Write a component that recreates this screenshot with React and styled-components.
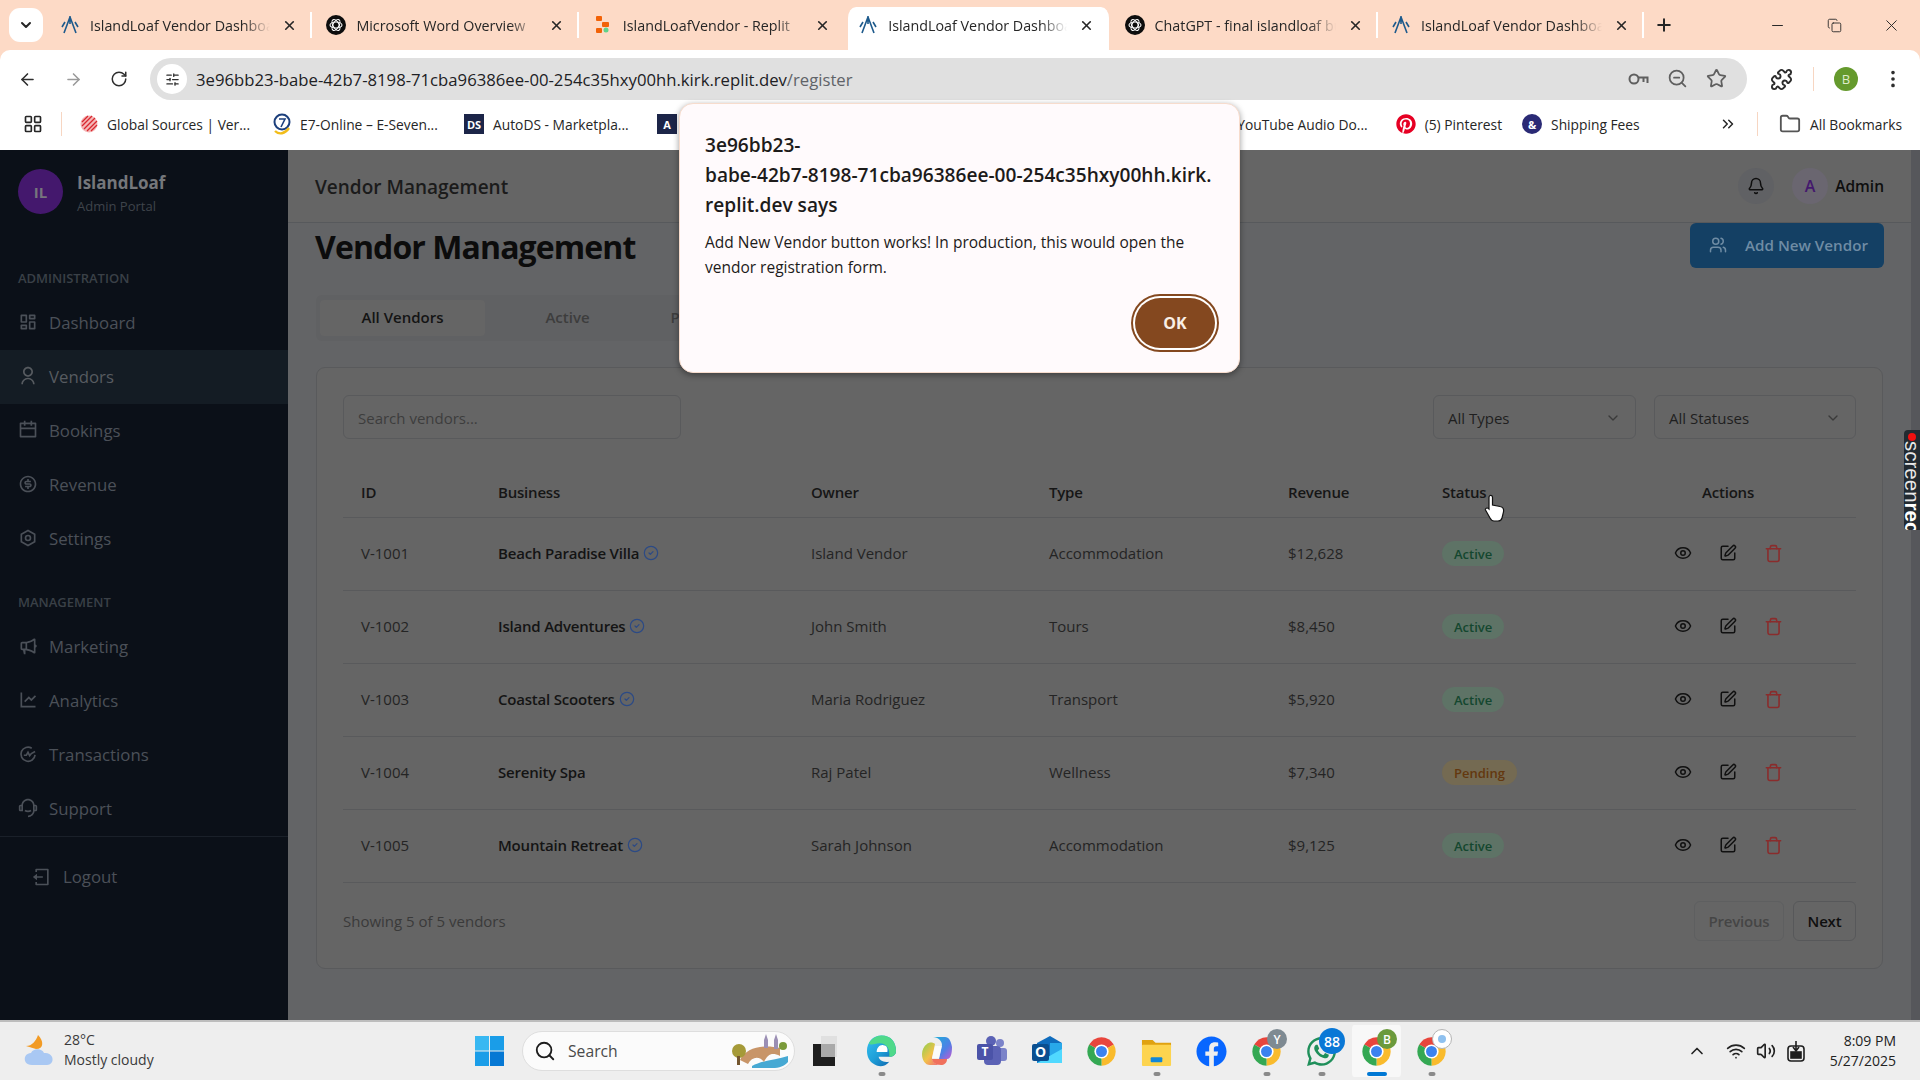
import React from "react";
import styled, { createGlobalStyle } from "styled-components";
import {
  ArrowLeft, ArrowRight, RotateCw, ZoomOut, Star, Puzzle, EllipsisVertical, X, Plus,
  ChevronDown, Minus, Copy, LayoutGrid, Folder, ChevronsRight, Bell, Users, CircleCheck, Search,
  ChevronUp, Wifi, Volume2, SlidersHorizontal, Eye, SquarePen, Trash,
} from "lucide-react";
import {
  RiDashboardLine, RiUserLine, RiCalendarLine, RiMoneyDollarCircleLine, RiMegaphoneLine,
  RiLineChartLine, RiCustomerService2Line, RiLogoutBoxLine,
} from "react-icons/ri";
import { FaPinterest, FaFacebook, FaWhatsapp } from "react-icons/fa";

const GlobalStyle = createGlobalStyle`
  html, body { margin: 0; padding: 0; height: 100%; overflow: hidden; }
  body { font-family: "Open Sans", "Liberation Sans", sans-serif; }
  * { box-sizing: border-box; }
`;

const Screen = styled.div`
  position: relative;
  width: 1920px;
  height: 1080px;
  overflow: hidden;
  display: flex;
  flex-direction: column;
  background: #fddac6;
`;

/* browser chrome */
const TabStrip = styled.div`
  height: 50px;
  flex: none;
  display: flex;
  align-items: flex-end;
  padding-left: 46px;
  color: #262626;
`;

const TabSearch = styled.div`
  position: absolute;
  left: 9px;
  top: 8px;
  width: 34px;
  height: 34px;
  border-radius: 11px;
  background: #fff;
  display: flex;
  align-items: center;
  justify-content: center;
`;

const Tab = styled.div`
  position: relative;
  width: 266.4px;
  height: 43px;
  flex: none;
  display: flex;
  align-items: center;
  padding: 0 15px 7px ${(p) => p.$pad}px;
  font-size: 14.3px;
  border: solid transparent;
  border-width: 0 ${(p) => (p.$active ? 3 : 0)}px;
  background: ${(p) => (p.$active ? "#fff" : "transparent")};
  background-clip: padding-box;
  border-radius: 11px 11px 0 0;
  &::after {
    content: "";
    display: ${(p) => (p.$sep ? "block" : "none")};
    position: absolute;
    right: 0;
    top: 5px;
    width: 2px;
    height: 26px;
    background: #fff;
  }
`;

const TabTitle = styled.span`
  flex: 1;
  margin-left: 10px;
  margin-right: 12px;
  white-space: nowrap;
  overflow: hidden;
  -webkit-mask-image: linear-gradient(90deg, #000 85%, transparent 100%);
  mask-image: linear-gradient(90deg, #000 85%, transparent 100%);
`;

const NewTab = styled.div`
  margin-left: 10px;
  height: 43px;
  padding-bottom: 7px;
  display: flex;
  align-items: center;
`;

const WindowControls = styled.div`
  margin-left: auto;
  height: 50px;
  width: 170px;
  display: flex;
  align-items: center;
  justify-content: space-between;
  padding: 0 19px;
`;

const Toolbar = styled.div`
  height: 50px;
  flex: none;
  background: #fff;
  border-radius: 10px 10px 0 0;
  display: flex;
  align-items: center;
  padding: 8px 18px 0 18px;
  color: #2e2e2e;
`;

const NavIcons = styled.div`
  width: 132px;
  flex: none;
  display: flex;
  gap: 27px;
  align-items: center;
`;

const Omnibox = styled.div`
  width: 1597px;
  flex: none;
  height: 42px;
  border-radius: 21px;
  background: #e0e0e0;
  display: flex;
  align-items: center;
  padding: 0 20px 0 7px;
`;

const SiteInfo = styled.div`
  width: 30px;
  height: 30px;
  border-radius: 50%;
  background: #fff;
  display: flex;
  align-items: center;
  justify-content: center;
  margin-right: 9px;
`;

const UrlText = styled.div`
  flex: 1;
  font-size: 16.7px;
  color: #202124;
  span { color: #5f6368; }
`;

const OmniIcons = styled.div`
  display: flex;
  gap: 18px;
  color: #5f5f5f;
`;

const ToolbarEnd = styled.div`
  flex: 1;
  display: flex;
  align-items: center;
  padding-left: 23px;
  gap: 20px;
`;

const ProfileDot = styled.div`
  width: 24px;
  height: 24px;
  border-radius: 50%;
  background: #659a2d;
  color: #dfeccc;
  font-size: 13px;
  display: flex;
  align-items: center;
  justify-content: center;
`;

const Kebab = styled.div`
  margin-left: 4px;
  display: flex;
`;

const ThinRule = styled.div`
  width: 1px;
  height: 24px;
  flex: none;
  background: #f7d6c2;
  margin: 0 ${(p) => p.$right || 0}px 0 ${(p) => p.$left || 0}px;
`;

const BookmarkBar = styled.div`
  height: 50px;
  flex: none;
  background: #fff;
  display: flex;
  align-items: center;
  padding: 0 18px 2px 23px;
  font-size: 13.8px;
  color: #262626;
`;

const BookmarkGroup = styled.div`
  display: flex;
  align-items: center;
  gap: ${(p) => p.$gap || 0}px;
  margin-left: ${(p) => (p.$end ? "auto" : "0")};
`;

const Bookmark = styled.div`
  display: flex;
  align-items: center;
  gap: 9px;
  white-space: nowrap;
  width: ${(p) => (p.$w ? `${p.$w}px` : "auto")};
  margin-right: ${(p) => p.$right || 0}px;
`;

const Favicon = styled.div`
  width: 20px;
  height: 20px;
  flex: none;
  border-radius: ${(p) => (p.$round ? "50%" : "0")};
  background: ${(p) => p.$bg || "transparent"};
  color: #fff;
  font-size: 11px;
  font-weight: 700;
  display: flex;
  align-items: center;
  justify-content: center;
`;

const MoreBookmarks = styled.div`
  display: flex;
  margin: 0 20px 0 77px;
`;

/* page */
const Body = styled.div`
  flex: 1;
  min-height: 0;
  display: flex;
`;

const Sidebar = styled.aside`
  width: 288px;
  flex: none;
  background: #0b1018;
  display: flex;
  flex-direction: column;
  color: #4b5058;
`;

const Brand = styled.div`
  height: 96px;
  padding: 19px 18px 0;
  display: flex;
  gap: 14px;
`;

const BrandMark = styled.div`
  width: 45px;
  height: 45px;
  border-radius: 50%;
  background: #44186d;
  color: #77757d;
  font-size: 15px;
  font-weight: 700;
  display: flex;
  align-items: center;
  justify-content: center;
`;

const BrandName = styled.div`
  font-size: 17px;
  font-weight: 700;
  line-height: 27px;
  color: #75777b;
`;

const BrandSub = styled.div`
  font-size: 13px;
  line-height: 20px;
  color: #3f444b;
`;

const SectionLabel = styled.div`
  height: 50px;
  padding: 22px 18px 0;
  font-size: 13px;
  line-height: 20px;
  font-weight: 600;
  color: #3a4047;
  margin-top: ${(p) => p.$top || 0}px;
`;

const NavItem = styled.div`
  height: 54px;
  display: flex;
  align-items: center;
  gap: 11px;
  padding: 0 0 2px 18px;
  font-size: 16.8px;
  color: ${(p) => (p.$active ? "#575b60" : "#4b5058")};
  background: ${(p) => (p.$active ? "#141c24" : "transparent")};
`;

const SideFoot = styled.div`
  border-top: 1px solid #1a2029;
  height: 84px;
  display: flex;
  align-items: center;
  gap: 11px;
  padding: 0 0 4px 32px;
  font-size: 16.8px;
`;

const Main = styled.main`
  flex: 1;
  min-width: 0;
  background: #636466;
  display: flex;
  flex-direction: column;
  color: #1b1b1b;
`;

const MainHead = styled.header`
  height: 73px;
  flex: none;
  border-bottom: 1px solid #57595c;
  background: #656565;
  display: flex;
  align-items: center;
  padding: 0 27px 0 27px;
  margin-right: 9px;
`;

const MainHeadTitle = styled.div`
  flex: 1;
  padding-top: 2px;
  font-size: 19px;
  font-weight: 600;
`;

const RoundIcon = styled.div`
  width: 36px;
  height: 36px;
  border-radius: 50%;
  background: ${(p) => p.$bg};
  color: ${(p) => p.$fg};
  font-size: 16px;
  font-weight: 600;
  display: flex;
  align-items: center;
  justify-content: center;
  margin-right: ${(p) => p.$gap}px;
`;

const AdminName = styled.div`
  font-size: 15.5px;
  font-weight: 600;
  color: #0e0e0e;
`;

const Content = styled.div`
  position: relative;
  flex: 1;
  padding: 0 28px;
  margin-right: 9px;
`;

const TitleRow = styled.div`
  display: flex;
  justify-content: space-between;
  align-items: flex-start;
  height: 72px;
`;

const PageTitle = styled.h1`
  margin: 0 0 0 -1px;
  font-size: 32px;
  line-height: 48px;
  font-weight: 700;
  letter-spacing: -0.9px;
  color: #0c0c0c;
`;

const PrimaryButton = styled.div`
  width: 194px;
  height: 45px;
  margin-right: -1px;
  padding: 0 0 2px 19px;
  border-radius: 6px;
  background: #144064;
  color: #6f8ca4;
  font-size: 15.2px;
  font-weight: 600;
  display: flex;
  align-items: center;
  gap: 18px;
`;

const TabsList = styled.div`
  height: 46px;
  width: 700px;
  padding: 5px 4px;
  display: flex;
  background: #606163;
  border-radius: 6px;
  margin-bottom: 26px;
`;

const TabTrigger = styled.div`
  width: ${(p) => p.$w || 165}px;
  height: 36px;
  padding-bottom: 2px;
  border-radius: 4px;
  background: ${(p) => (p.$active ? "#656565" : "transparent")};
  color: ${(p) => (p.$active ? "#141414" : "#3d3d3d")};
  font-size: 15px;
  font-weight: 600;
  display: flex;
  align-items: center;
  justify-content: center;
`;

const Card = styled.section`
  border: 1px solid #595a5c;
  border-radius: 9px;
  background: #656565;
  padding: 27px 26px 26px;
  height: 602px;
`;

const Filters = styled.div`
  display: flex;
  align-items: center;
  gap: 18px;
  margin-bottom: 29px;
`;

const Field = styled.div`
  height: 44px;
  width: ${(p) => p.$w}px;
  margin-right: ${(p) => p.$right || 0}px;
  border: 1px solid #595a5c;
  border-radius: 6px;
  display: flex;
  align-items: center;
  justify-content: space-between;
  padding: 1px 14px 0;
  font-size: 15px;
  color: ${(p) => p.$fg || "#1f1f1f"};
`;

const Row = styled.div`
  display: grid;
  grid-template-columns: 137px 313px 238px 239px 154px 176px 256px;
  align-items: center;
  height: ${(p) => (p.$head ? 50 : 73)}px;
  padding-bottom: 2px;
  border-bottom: 1px solid #595a5c;
  font-size: 15px;
`;

const HeadCell = styled.div`
  padding-left: ${(p) => (p.$center ? 0 : 18)}px;
  text-align: ${(p) => (p.$center ? "center" : "left")};
  font-weight: 600;
  letter-spacing: -0.2px;
  color: #161616;
`;

const Cell = styled.div`
  padding-left: 18px;
  color: #242424;
  display: flex;
  align-items: center;
  gap: 4px;
`;

const BizName = styled.span`
  font-weight: 600;
  letter-spacing: -0.2px;
  color: #141414;
`;

const Badge = styled.span`
  height: 25px;
  padding: 1px 12px 0;
  border-radius: 13px;
  font-size: 13px;
  font-weight: 600;
  display: inline-flex;
  align-items: center;
  background: ${(p) => (p.$status === "Pending" ? "#746a52" : "#5e7366")};
  color: ${(p) => (p.$status === "Pending" ? "#63380f" : "#14472f")};
`;

const Actions = styled.div`
  display: flex;
  justify-content: center;
  align-items: center;
  gap: 27px;
  color: #111;
`;

const TableFoot = styled.div`
  display: flex;
  align-items: center;
  justify-content: space-between;
  margin-top: 18px;
  font-size: 15px;
  color: #3a3a3a;
`;

const Pager = styled.div`
  display: flex;
  gap: 9px;
`;

const PagerButton = styled.div`
  width: ${(p) => p.$w}px;
  height: 40px;
  border: 1px solid ${(p) => (p.$off ? "#5e5f60" : "#57585a")};
  border-radius: 6px;
  display: flex;
  align-items: center;
  justify-content: center;
  font-weight: 600;
  letter-spacing: -0.2px;
  color: ${(p) => (p.$off ? "#454545" : "#0f0f0f")};
`;

const Scrollbar = styled.div`
  position: absolute;
  right: 0;
  top: 150px;
  width: 9px;
  height: 870px;
  background: #56575b;
`;

/* js alert */
const Dialog = styled.div`
  position: absolute;
  left: 679px;
  top: 103px;
  width: 561px;
  height: 270px;
  padding: 26px 25px 0;
  border-radius: 14px;
  border: 1px solid #f7dccd;
  background: #fffafc;
  box-shadow: 0 2px 6px rgba(0, 0, 0, 0.4);
  color: #1d1b1a;
`;

const DialogTitle = styled.div`
  font-size: 19.1px;
  line-height: 30px;
  font-weight: 600;
  margin-bottom: 10px;
`;

const DialogText = styled.div`
  font-size: 15.5px;
  line-height: 25px;
`;

const OkButton = styled.div`
  position: absolute;
  right: 24px;
  bottom: 24px;
  width: 80px;
  height: 50px;
  border-radius: 25px;
  background: #84481f;
  box-shadow: 0 0 0 2px #fff, 0 0 0 4px #84481f;
  color: #f9efe6;
  font-size: 16px;
  font-weight: 700;
  display: flex;
  align-items: center;
  justify-content: center;
`;

const RecWidget = styled.div`
  position: absolute;
  right: 0;
  top: 430px;
  width: 16px;
  height: 100px;
  border-radius: 4px 0 0 4px;
  background: #222a31;
  display: flex;
  flex-direction: column;
  align-items: center;
  padding-top: 3px;
  overflow: hidden;
`;

const RecDot = styled.div`
  width: 8px;
  height: 8px;
  flex: none;
  border-radius: 50%;
  background: #f01010;
`;

const RecText = styled.div`
  writing-mode: vertical-rl;
  font-family: "Liberation Sans", sans-serif;
  font-size: 20.5px;
  line-height: 16px;
  color: #e8e8e8;
  b { color: #fff; font-weight: 900; }
`;

const Pointer = styled.svg`
  position: absolute;
  left: 1484px;
  top: 494px;
`;

/* taskbar */
const Taskbar = styled.footer`
  height: 60px;
  flex: none;
  background: #eeeeee;
  border-top: 2px solid #bdbdbd;
  display: flex;
  align-items: center;
  color: #222;
`;

const Weather = styled.div`
  width: 475px;
  padding: 0 0 2px 24px;
  display: flex;
  gap: 9px;
  align-items: center;
  flex: none;
`;

const WeatherText = styled.div`
  font-size: 14px;
  line-height: 20px;
  color: #3a3a3a;
`;

const SearchPill = styled.div`
  width: 273px;
  height: 40px;
  flex: none;
  margin: 0 2px 0 18px;
  border-radius: 20px;
  background: #fbfbfb;
  border: 1px solid #dedede;
  display: flex;
  align-items: center;
  padding: 0 6px 0 11px;
  gap: 12px;
  font-size: 15.7px;
  color: #4a4a4a;
`;

const SearchLabel = styled.span`
  flex: 1;
`;

const TaskIcon = styled.div`
  position: relative;
  width: 55px;
  height: 52px;
  flex: none;
  margin-right: ${(p) => p.$after || 0}px;
  display: flex;
  align-items: center;
  justify-content: center;
  border: solid transparent;
  border-width: 0 3.5px;
  background: ${(p) => (p.$current ? "#f8f8f8" : "transparent")};
  background-clip: padding-box;
  border-radius: 5px;
  &::after {
    content: "";
    display: ${(p) => (p.$open || p.$current ? "block" : "none")};
    position: absolute;
    left: 50%;
    bottom: 1px;
    transform: translateX(-50%);
    width: ${(p) => (p.$current ? 20 : 7)}px;
    height: 4px;
    border-radius: 2px;
    background: ${(p) => (p.$current ? "#0078d4" : "#8a8a8a")};
  }
`;

const IconBadge = styled.div`
  position: absolute;
  left: ${(p) => p.$left || 25}px;
  top: ${(p) => p.$top || 4}px;
  width: ${(p) => p.$size || 20}px;
  height: ${(p) => p.$size || 20}px;
  border-radius: 50%;
  background: ${(p) => p.$bg};
  border: ${(p) => (p.$ring ? "1px solid #b5b5b5" : "none")};
  color: #fff;
  font-size: ${(p) => (p.$size ? 14 : 12)}px;
  font-weight: 600;
  display: flex;
  align-items: center;
  justify-content: center;
`;

const BadgeDot = styled.span`
  width: 8px;
  height: 8px;
  border-radius: 50%;
  background: #8fc1ef;
`;

const Tray = styled.div`
  margin-left: auto;
  display: flex;
  align-items: center;
  gap: 10px;
  padding-right: 24px;
`;

const Caret = styled.div`
  display: flex;
  margin-right: 9px;
`;

const Clock = styled.div`
  margin-left: 14px;
  text-align: right;
  font-size: 14px;
  line-height: 20px;
  color: #222;
`;

const IslandLogo = ({ size = 20 }) => (
  <svg width={size} height={size} viewBox="0 0 20 20" fill="none" stroke="#1d5a8c" strokeWidth="1.6">
    <path d="M10 1 V9 M10 2 L4 18 M10 2 L16 18 M5 7 L2 12 M15 7 L18 12" />
  </svg>
);

const GptLogo = () => (
  <svg width="20" height="20" viewBox="0 0 20 20" fill="none">
    <circle cx="10" cy="10" r="10" fill="#0d0d0d" />
    <g stroke="#fff" strokeWidth="1.1">
      <ellipse cx="10" cy="10" rx="6" ry="3" />
      <ellipse cx="10" cy="10" rx="6" ry="3" transform="rotate(60 10 10)" />
      <ellipse cx="10" cy="10" rx="6" ry="3" transform="rotate(120 10 10)" />
    </g>
  </svg>
);

const ReplitLogo = () => (
  <svg width="20" height="20" viewBox="0 0 20 20">
    <rect x="3" y="1" width="6" height="5" rx="1" fill="#f26207" />
    <rect x="9" y="7" width="7" height="5" rx="1" fill="#f26207" />
    <rect x="3" y="13" width="6" height="5" rx="1" fill="#f26207" />
    <circle cx="13" cy="15" r="2.5" fill="#5fd38b" />
  </svg>
);

const KeyIcon = () => (
  <svg width="22" height="22" viewBox="0 0 22 22" fill="none" stroke="currentColor" strokeWidth="2">
    <circle cx="7" cy="11" r="4.5" />
    <path d="M11.5 9.5 H20.5 V15 M16.5 10 V14" />
  </svg>
);

const ChromeLogo = () => (
  <svg width="31" height="31" viewBox="0 0 48 48">
    <path d="M24 24 L5 13 A22 22 0 0 1 43 13 Z" fill="#e8453c" />
    <path d="M24 24 L43 13 A22 22 0 0 1 24 46 Z" fill="#f9bb2d" />
    <path d="M24 24 L24 46 A22 22 0 0 1 5 13 Z" fill="#34a853" />
    <circle cx="24" cy="24" r="11" fill="#fff" />
    <circle cx="24" cy="24" r="8.5" fill="#3b82ee" />
  </svg>
);

const EdgeLogo = () => (
  <svg width="31" height="34" viewBox="0 0 32 34">
    <defs>
      <linearGradient id="edgeg" x1="0" y1="0" x2="1" y2="1">
        <stop offset="0" stopColor="#35c1f1" />
        <stop offset="0.5" stopColor="#1e9fd8" />
        <stop offset="1" stopColor="#0c59a4" />
      </linearGradient>
    </defs>
    <path d="M16 1 C26 1 31 8 31 17 C31 21 28 23 24 23 L13 23 C14 27 18 29 24 28 C20 33 14 34 9 31 C3 28 1 22 1 17 C1 8 7 1 16 1 Z" fill="url(#edgeg)" />
    <path d="M16 1 C26 1 31 8 31 17 C31 21 28 23 24 23 C25 16 22 9 14 9 C9 9 5 12 3 9 C6 4 11 1 16 1 Z" fill="#4fd98a" />
    <path d="M11 18 C11 13 15 10 18 11 C21 11 23 14 22 18 Z" fill="#fff" />
  </svg>
);

const CopilotLogo = () => (
  <svg width="32" height="32" viewBox="0 0 32 32">
    <defs>
      <linearGradient id="copa" x1="0" y1="0" x2="1" y2="1">
        <stop offset="0" stopColor="#1bb0d8" />
        <stop offset="0.6" stopColor="#4f7fe6" />
        <stop offset="1" stopColor="#c65ad0" />
      </linearGradient>
      <linearGradient id="copb" x1="0" y1="0" x2="1" y2="1">
        <stop offset="0" stopColor="#8ccf4f" />
        <stop offset="0.5" stopColor="#f2c14a" />
        <stop offset="1" stopColor="#ef5f7c" />
      </linearGradient>
    </defs>
    <path d="M12 2 H24 C28 2 30 6 31 12 C31 18 30 24 26 24 H18 L21 10 C21 6 17 2 12 2 Z" fill="url(#copa)" />
    <path d="M6 9 C8 7 12 7 14 9 L11 23 C11 27 15 30 20 30 H9 C4 30 1 25 1 19 C1 15 3 11 6 9 Z" fill="url(#copb)" />
    <path d="M11 24 H26 C26 28 23 30 20 30 C15 30 11 27 11 24 Z" fill="#f0705c" />
    <path d="M14 11 H21 L18 23 H11 Z" fill="#fff" opacity="0.75" />
  </svg>
);

const TeamsLogo = () => (
  <svg width="32" height="32" viewBox="0 0 32 32">
    <circle cx="24" cy="8" r="4" fill="#7b83c9" />
    <rect x="19" y="13" width="12" height="13" rx="3" fill="#7b83c9" />
    <circle cx="15" cy="6" r="5" fill="#5b62b5" />
    <rect x="8" y="11" width="17" height="19" rx="4" fill="#5b62b5" />
    <rect x="1" y="9" width="16" height="16" rx="2" fill="#4b53a8" />
    <text x="9" y="21" textAnchor="middle" fontSize="12" fontWeight="700" fill="#fff" fontFamily="Open Sans">T</text>
  </svg>
);

const OutlookLogo = () => (
  <svg width="32" height="32" viewBox="0 0 32 32">
    <path d="M6 8 L19 1 L31 8 V28 H6 Z" fill="#0f6cbd" />
    <path d="M19 8 H31 V28 H19 Z" fill="#28a8ea" />
    <path d="M6 28 L31 14 V28 Z" fill="#50d9ff" />
    <rect x="1" y="9" width="17" height="17" rx="2" fill="#0a4f90" />
    <text x="9.5" y="22" textAnchor="middle" fontSize="14" fontWeight="700" fill="#fff" fontFamily="Open Sans">O</text>
  </svg>
);

const FolderLogo = () => (
  <svg width="31" height="31" viewBox="0 0 32 32">
    <path d="M1 4 H12 L15 7 H31 V12 H1 Z" fill="#e0a211" />
    <rect x="1" y="9" width="30" height="22" rx="1" fill="#fdd44f" />
    <rect x="10" y="22" width="12" height="5" rx="1" fill="#1287d8" />
  </svg>
);

const WinLogo = () => (
  <svg width="29" height="30" viewBox="0 0 29 30">
    <rect width="14" height="14.5" fill="#38b8f2" />
    <rect x="15" width="14" height="14.5" fill="#1a9de8" />
    <rect y="15.5" width="14" height="14.5" fill="#1a9de8" />
    <rect x="15" y="15.5" width="14" height="14.5" fill="#0678d4" />
  </svg>
);

const TaskViewLogo = () => (
  <svg width="24" height="30" viewBox="0 0 24 30">
    <rect x="0" y="8" width="22" height="22" fill="#1e1e1e" />
    <rect x="8" y="0" width="16" height="21" fill="#e0e0e0" />
    <rect x="8" y="8" width="14" height="13" fill="#a9a9a9" />
  </svg>
);

const WeatherLogo = () => (
  <svg width="31" height="30" viewBox="0 0 31 30">
    <path d="M14 0 C20 6 20 14 12 14 L2 11 C8 11 12 6 14 0 Z" fill="#f29b25" />
    <path d="M8 30 C2 30 0 26 1 22 C2 19 5 18 7 18 C9 13 18 13 20 18 C27 17 30 23 28 27 C27 29 25 30 23 30 Z" fill="#a9c8f3" />
  </svg>
);

const BridgeArt = () => (
  <svg width="56" height="34" viewBox="0 0 56 34">
    <path d="M20 32 C30 26 44 26 56 22 V28 C52 32 48 34 40 34 H20 Z" fill="#47a9d3" />
    <path d="M8 26 C14 14 30 10 48 14 V22 C40 18 36 20 32 28 C28 22 20 22 16 30 Z" fill="#c89568" />
    <circle cx="7" cy="17" r="7" fill="#a59a38" />
    <rect x="5" y="22" width="3" height="9" fill="#73562f" />
    <path d="M32 6 L34 0 L36 6 V14 H32 Z M42 6 L44 0 L46 6 V15 H42 Z" fill="#9b8fb4" />
    <circle cx="51" cy="12" r="4" fill="#7a9a3a" />
  </svg>
);

const GlobalFav = () => (
  <svg width="18" height="20" viewBox="0 0 18 20">
    <circle cx="9" cy="10" r="8.5" fill="#f4b7b7" />
    <g stroke="#d9272e" strokeWidth="1.3">
      <path d="M2 8 L8 2 M2 12 L12 2 M4 15 L15 4 M7 17 L17 7 M11 17 L17 11" />
    </g>
  </svg>
);

const E7Fav = () => (
  <svg width="18" height="22" viewBox="0 0 18 22" fill="none">
    <circle cx="9" cy="9" r="7.5" stroke="#1c3f7c" strokeWidth="2" />
    <path d="M6 6 H12 L8 14" stroke="#1c3f7c" strokeWidth="1.6" />
    <path d="M2 18 C6 22 12 21 16 15" stroke="#f2bd1a" strokeWidth="2.4" />
  </svg>
);

const TrayBattery = () => (
  <svg width="20" height="22" viewBox="0 0 20 22" fill="none" stroke="#1e1e1e" strokeWidth="1.6">
    <rect x="2" y="6" width="16" height="15" rx="3" />
    <rect x="5" y="12" width="10" height="6" fill="#1e1e1e" />
    <path d="M10 1 V10 M7 7 L10 11 L13 7" />
  </svg>
);

function HexGear({ size }) {
  return (
    <svg width={size} height={size} viewBox="0 0 24 24" fill="none" stroke="currentColor" strokeWidth="2">
      <path d="M12 3 L20 7.5 V16.5 L12 21 L4 16.5 V7.5 Z" />
      <circle cx="12" cy="12" r="3" />
    </svg>
  );
}

function PulseCircle({ size }) {
  return (
    <svg width={size} height={size} viewBox="0 0 24 24" fill="none" stroke="currentColor" strokeWidth="2">
      <path d="M20.5 13 A8.5 8.5 0 1 1 16.5 5" />
      <path d="M7 13.5 L10 13.5 L12 10 L14 14 L16 11.5 L20.5 9" />
    </svg>
  );
}

const TABS = [
  { title: "IslandLoaf Vendor Dashboard", icon: <IslandLogo />, sep: true, pad: 14 },
  { title: "Microsoft Word Overview", icon: <GptLogo />, sep: true, pad: 14 },
  { title: "IslandLoafVendor - Replit", icon: <ReplitLogo />, pad: 14 },
  { title: "IslandLoaf Vendor Dashboard", icon: <IslandLogo />, active: true, pad: 10 },
  { title: "ChatGPT - final islandloaf build", icon: <GptLogo />, sep: true, pad: 13 },
  { title: "IslandLoaf Vendor Dashboard", icon: <IslandLogo />, sep: true, pad: 13 },
];

const ADMIN_NAV = [
  { label: "Dashboard", icon: RiDashboardLine },
  { label: "Vendors", icon: RiUserLine, active: true },
  { label: "Bookings", icon: RiCalendarLine },
  { label: "Revenue", icon: RiMoneyDollarCircleLine },
  { label: "Settings", icon: HexGear },
];

const MGMT_NAV = [
  { label: "Marketing", icon: RiMegaphoneLine },
  { label: "Analytics", icon: RiLineChartLine },
  { label: "Transactions", icon: PulseCircle },
  { label: "Support", icon: RiCustomerService2Line },
];

const VENDORS = [
  { id: "V-1001", name: "Beach Paradise Villa", verified: true, owner: "Island Vendor", type: "Accommodation", revenue: "$12,628", status: "Active" },
  { id: "V-1002", name: "Island Adventures", verified: true, owner: "John Smith", type: "Tours", revenue: "$8,450", status: "Active" },
  { id: "V-1003", name: "Coastal Scooters", verified: true, owner: "Maria Rodriguez", type: "Transport", revenue: "$5,920", status: "Active" },
  { id: "V-1004", name: "Serenity Spa", verified: false, owner: "Raj Patel", type: "Wellness", revenue: "$7,340", status: "Pending" },
  { id: "V-1005", name: "Mountain Retreat", verified: true, owner: "Sarah Johnson", type: "Accommodation", revenue: "$9,125", status: "Active" },
];

const TASK_APPS = [
  { key: "edge", el: <EdgeLogo />, open: true },
  { key: "copilot", el: <CopilotLogo /> },
  { key: "teams", el: <TeamsLogo /> },
  { key: "outlook", el: <OutlookLogo /> },
  { key: "chrome", el: <ChromeLogo /> },
  { key: "files", el: <FolderLogo />, open: true },
  { key: "fb", el: <FaFacebook size={31} color="#0866ff" /> },
  { key: "chromeY", el: <ChromeLogo />, open: true, badge: { bg: "#7e8a92", text: "Y" } },
  { key: "wa", el: <FaWhatsapp size={33} color="#1f8f5a" />, open: true, badge: { bg: "#0a78d6", text: "88", left: 22, top: 3, size: 26 } },
  { key: "chromeB", el: <ChromeLogo />, current: true, badge: { bg: "#6b9a3c", text: "B" } },
  { key: "chromeX", el: <ChromeLogo />, open: true, badge: { bg: "#fff", ring: true, dot: true } },
];

const Chrome = () => (
  <>
    <TabStrip>
      <TabSearch>
        <ChevronDown size={16} strokeWidth={3} />
      </TabSearch>
      {TABS.map((t, i) => (
        <Tab key={i} $active={t.active} $sep={t.sep} $pad={t.pad}>
          {t.icon}
          <TabTitle>{t.title}</TabTitle>
          <X size={15} strokeWidth={2.6} />
        </Tab>
      ))}
      <NewTab>
        <Plus size={20} strokeWidth={2.4} />
      </NewTab>
      <WindowControls>
        <Minus size={17} strokeWidth={1.4} />
        <Copy size={15} strokeWidth={1.4} />
        <X size={19} strokeWidth={1.2} />
      </WindowControls>
    </TabStrip>
    <Toolbar>
      <NavIcons>
        <ArrowLeft size={19} />
        <ArrowRight size={19} color="#9a9a9a" />
        <RotateCw size={18} />
      </NavIcons>
      <Omnibox>
        <SiteInfo>
          <SlidersHorizontal size={15} />
        </SiteInfo>
        <UrlText>
          3e96bb23-babe-42b7-8198-71cba96386ee-00-254c35hxy00hh.kirk.replit.dev<span>/register</span>
        </UrlText>
        <OmniIcons>
          <KeyIcon />
          <ZoomOut size={21} />
          <Star size={21} />
        </OmniIcons>
      </Omnibox>
      <ToolbarEnd>
        <Puzzle size={23} />
        <ThinRule />
        <ProfileDot>B</ProfileDot>
        <Kebab><EllipsisVertical size={22} /></Kebab>
      </ToolbarEnd>
    </Toolbar>
    <BookmarkBar>
      <LayoutGrid size={20} />
      <ThinRule $left={18} $right={18} />
      <BookmarkGroup>
        <Bookmark $w={193}><GlobalFav />Global Sources | Ver...</Bookmark>
        <Bookmark $w={191}><E7Fav />E7-Online – E-Seven...</Bookmark>
        <Bookmark $w={193}><Favicon $bg="#1c2548">DS</Favicon>AutoDS - Marketpla...</Bookmark>
        <Favicon $bg="#1c2548">A</Favicon>
      </BookmarkGroup>
      <BookmarkGroup $end $gap={20}>
        <Bookmark $right={8}>YouTube Audio Do...</Bookmark>
        <Bookmark><FaPinterest size={20} color="#e60023" />(5) Pinterest</Bookmark>
        <Bookmark $w={120}><Favicon $bg="#2a2a75" $round>&amp;</Favicon>Shipping Fees</Bookmark>
      </BookmarkGroup>
      <MoreBookmarks><ChevronsRight size={18} /></MoreBookmarks>
      <ThinRule $right={21} />
      <Bookmark><Folder size={22} color="#555" />All Bookmarks</Bookmark>
    </BookmarkBar>
  </>
);

const Side = () => (
  <Sidebar>
    <Brand>
      <BrandMark>IL</BrandMark>
      <div>
        <BrandName>IslandLoaf</BrandName>
        <BrandSub>Admin Portal</BrandSub>
      </div>
    </Brand>
    <SectionLabel>ADMINISTRATION</SectionLabel>
    {ADMIN_NAV.map((n) => (
      <NavItem key={n.label} $active={n.active}>
        <n.icon size={20} />
        {n.label}
      </NavItem>
    ))}
    <SectionLabel $top={4}>MANAGEMENT</SectionLabel>
    {MGMT_NAV.map((n) => (
      <NavItem key={n.label}>
        <n.icon size={20} />
        {n.label}
      </NavItem>
    ))}
    <SideFoot>
      <RiLogoutBoxLine size={20} />
      Logout
    </SideFoot>
  </Sidebar>
);

const VendorTable = () => (
  <>
    <Row $head>
      <HeadCell>ID</HeadCell>
      <HeadCell>Business</HeadCell>
      <HeadCell>Owner</HeadCell>
      <HeadCell>Type</HeadCell>
      <HeadCell>Revenue</HeadCell>
      <HeadCell>Status</HeadCell>
      <HeadCell $center>Actions</HeadCell>
    </Row>
    {VENDORS.map((v) => (
      <Row key={v.id}>
        <Cell>{v.id}</Cell>
        <Cell>
          <BizName>{v.name}</BizName>
          {v.verified && <CircleCheck size={16} strokeWidth={1.8} color="#2c4a85" />}
        </Cell>
        <Cell>{v.owner}</Cell>
        <Cell>{v.type}</Cell>
        <Cell>{v.revenue}</Cell>
        <Cell><Badge $status={v.status}>{v.status}</Badge></Cell>
        <Actions>
          <Eye size={18} />
          <SquarePen size={18} />
          <Trash size={19} color="#8a2c2c" />
        </Actions>
      </Row>
    ))}
  </>
);

const Tasks = () => (
  <Taskbar>
    <Weather>
      <WeatherLogo />
      <WeatherText>
        <div>28°C</div>
        <div>Mostly cloudy</div>
      </WeatherText>
    </Weather>
    <WinLogo />
    <SearchPill>
      <Search size={22} color="#1c1c1c" />
      <SearchLabel>Search</SearchLabel>
      <BridgeArt />
    </SearchPill>
    <TaskIcon $after={2}><TaskViewLogo /></TaskIcon>
    {TASK_APPS.map((a) => (
      <TaskIcon key={a.key} $open={a.open} $current={a.current}>
        {a.el}
        {a.badge && (
          <IconBadge $bg={a.badge.bg} $left={a.badge.left} $top={a.badge.top} $size={a.badge.size} $ring={a.badge.ring}>
            {a.badge.text}
            {a.badge.dot && <BadgeDot />}
          </IconBadge>
        )}
      </TaskIcon>
    ))}
    <Tray>
      <Caret><ChevronUp size={20} /></Caret>
      <Wifi size={20} />
      <Volume2 size={20} />
      <TrayBattery />
      <Clock>
        <div>8:09 PM</div>
        <div>5/27/2025</div>
      </Clock>
    </Tray>
  </Taskbar>
);

export default function App() {
  return (
    <Screen>
      <GlobalStyle />
      <Chrome />
      <Body>
        <Side />
        <Main>
          <MainHead>
            <MainHeadTitle>Vendor Management</MainHeadTitle>
            <RoundIcon $bg="#606164" $fg="#0e0e0e" $gap="18"><Bell size={18} /></RoundIcon>
            <RoundIcon $bg="#6a6670" $fg="#44186d" $gap="7">A</RoundIcon>
            <AdminName>Admin</AdminName>
          </MainHead>
          <Content>
            <TitleRow>
              <PageTitle>Vendor Management</PageTitle>
              <PrimaryButton><Users size={18} />Add New Vendor</PrimaryButton>
            </TitleRow>
            <TabsList>
              <TabTrigger $active>All Vendors</TabTrigger>
              <TabTrigger>Active</TabTrigger>
              <TabTrigger $w={100}>Pending</TabTrigger>
            </TabsList>
            <Card>
              <Filters>
                <Field $w={338} $right={734} $fg="#3d3d3d">Search vendors...</Field>
                <Field $w={203}>All Types<ChevronDown size={16} color="#3a3a3a" /></Field>
                <Field $w={202}>All Statuses<ChevronDown size={16} color="#3a3a3a" /></Field>
              </Filters>
              <VendorTable />
              <TableFoot>
                <span>Showing 5 of 5 vendors</span>
                <Pager>
                  <PagerButton $off $w={90}>Previous</PagerButton>
                  <PagerButton $w={63}>Next</PagerButton>
                </Pager>
              </TableFoot>
            </Card>
          </Content>
        </Main>
      </Body>
      <Tasks />
      <Scrollbar />
      <Dialog>
        <DialogTitle>3e96bb23-<br />babe-42b7-8198-71cba96386ee-00-254c35hxy00hh.kirk.<br />replit.dev says</DialogTitle>
        <DialogText>Add New Vendor button works! In production, this would open the vendor registration form.</DialogText>
        <OkButton>OK</OkButton>
      </Dialog>
      <RecWidget>
        <RecDot />
        <RecText>screen<b>rec</b></RecText>
      </RecWidget>
      <Pointer width="22" height="28" viewBox="0 0 22 28">
        <path d="M6 1.5 C7.5 1 8.5 2 8.5 3.5 V11 L16 12.5 C19 13 20 15 19.5 18 L18 24 C17.5 26 16 27 14 27 H10 C8 27 7 26 6 24 L1.5 16 C1 14.5 3 13 5 15 V3.5 C5 2.5 5.3 1.8 6 1.5 Z" fill="#fff" stroke="#111" strokeWidth="1.2" />
      </Pointer>
    </Screen>
  );
}
